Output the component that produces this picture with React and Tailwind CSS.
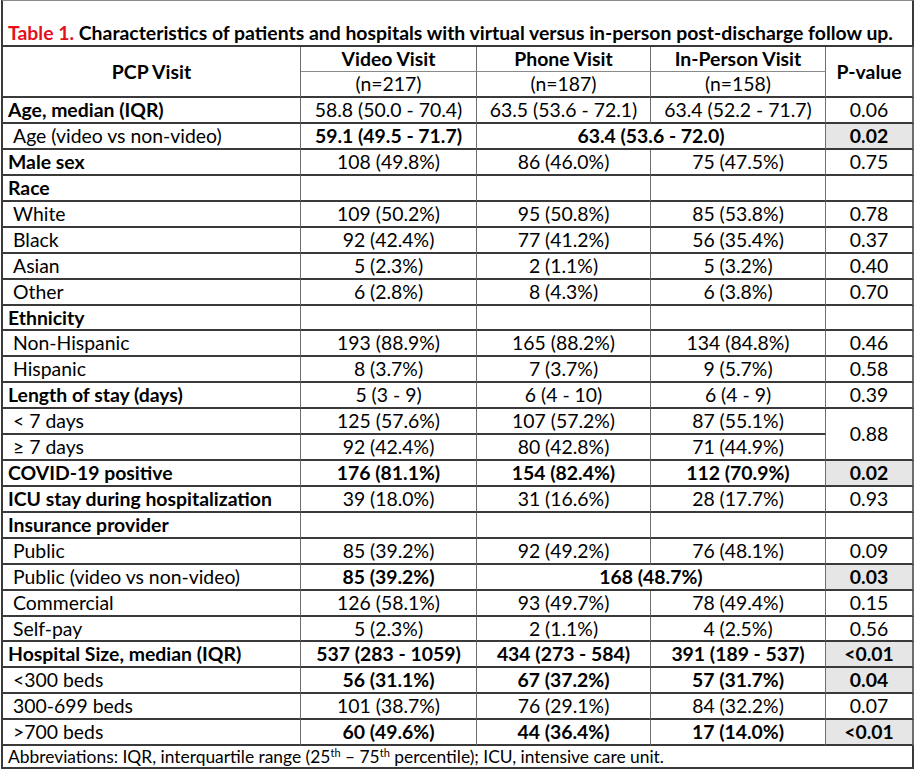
import React from 'react';

// Characteristics table (Word-style export)
const rows = [
  { label: 'Age, median (IQR)', bold: true, cells: ['58.8 (50.0 - 70.4)', '63.5 (53.6 - 72.1)', '63.4 (52.2 - 71.7)'], p: '0.06' },
  { label: 'Age (video vs non-video)', cells: [{ t: '59.1 (49.5 - 71.7)', b: true }, { t: '63.4 (53.6 - 72.0)', b: true, span: 2 }], p: '0.02', sig: true },
  { label: 'Male sex', bold: true, cells: ['108 (49.8%)', '86 (46.0%)', '75 (47.5%)'], p: '0.75' },
  { label: 'Race', bold: true, cells: ['', '', ''], p: '' },
  { label: 'White', cells: ['109 (50.2%)', '95 (50.8%)', '85 (53.8%)'], p: '0.78' },
  { label: 'Black', cells: ['92 (42.4%)', '77 (41.2%)', '56 (35.4%)'], p: '0.37' },
  { label: 'Asian', cells: ['5 (2.3%)', '2 (1.1%)', '5 (3.2%)'], p: '0.40' },
  { label: 'Other', cells: ['6 (2.8%)', '8 (4.3%)', '6 (3.8%)'], p: '0.70' },
  { label: 'Ethnicity', bold: true, cells: ['', '', ''], p: '', h: 'h-[25px]' },
  { label: 'Non-Hispanic', cells: ['193 (88.9%)', '165 (88.2%)', '134 (84.8%)'], p: '0.46' },
  { label: 'Hispanic', cells: ['8 (3.7%)', '7 (3.7%)', '9 (5.7%)'], p: '0.58' },
  { label: 'Length of stay (days)', bold: true, cells: ['5 (3 - 9)', '6 (4 - 10)', '6 (4 - 9)'], p: '0.39' },
  { label: '< 7 days', cells: ['125 (57.6%)', '107 (57.2%)', '87 (55.1%)'], p: '0.88', pSpan: 2 },
  { label: '≥ 7 days', cells: ['92 (42.4%)', '80 (42.8%)', '71 (44.9%)'], p: null },
  { label: 'COVID-19 positive', bold: true, cells: [{ t: '176 (81.1%)', b: true }, { t: '154 (82.4%)', b: true }, { t: '112 (70.9%)', b: true }], p: '0.02', sig: true },
  { label: 'ICU stay during hospitalization', bold: true, cells: ['39 (18.0%)', '31 (16.6%)', '28 (17.7%)'], p: '0.93' },
  { label: 'Insurance provider', bold: true, cells: ['', '', ''], p: '' },
  { label: 'Public', cells: ['85 (39.2%)', '92 (49.2%)', '76 (48.1%)'], p: '0.09' },
  { label: 'Public (video vs non-video)', cells: [{ t: '85 (39.2%)', b: true }, { t: '168 (48.7%)', b: true, span: 2 }], p: '0.03', sig: true },
  { label: 'Commercial', cells: ['126 (58.1%)', '93 (49.7%)', '78 (49.4%)'], p: '0.15' },
  { label: 'Self-pay', cells: ['5 (2.3%)', '2 (1.1%)', '4 (2.5%)'], p: '0.56', h: 'h-[25px]' },
  { label: 'Hospital Size, median (IQR)', bold: true, cells: [{ t: '537 (283 - 1059)', b: true }, { t: '434 (273 - 584)', b: true }, { t: '391 (189 - 537)', b: true }], p: '<0.01', sig: true },
  { label: '<300 beds', cells: [{ t: '56 (31.1%)', b: true }, { t: '67 (37.2%)', b: true }, { t: '57 (31.7%)', b: true }], p: '0.04', sig: true },
  { label: '300-699 beds', cells: ['101 (38.7%)', '76 (29.1%)', '84 (32.2%)'], p: '0.07' },
  { label: '>700 beds', cells: [{ t: '60 (49.6%)', b: true }, { t: '44 (36.4%)', b: true }, { t: '17 (14.0%)', b: true }], p: '<0.01', sig: true },
];

const cell = 'p-0 border-r border-b-2 border-r-[#6e6e6e] border-b-[#3a3a3a] align-middle';

export default function App() {
  return (
    <div className="bg-white w-[916px] h-[781px] pt-0 pl-[1px] text-black text-[19.4px] leading-none" style={{ fontFamily: 'Lato, "Open Sans", sans-serif' }}>
      <table className="table-fixed border-separate border-spacing-0 w-[913px]">
        <colgroup>
          <col className="w-[300px]" />
          <col className="w-[176px]" />
          <col className="w-[174px]" />
          <col className="w-[175px]" />
          <col className="w-[88px]" />
        </colgroup>
        <tbody>
          <tr className="h-[47px]">
            <td colSpan={5} className="p-0 pl-[5px] pb-[3px] align-bottom font-bold border-t border-l-2 border-r-2 border-b-2 border-t-[#8a8a8a] border-l-[#3a3a3a] border-r-[#3a3a3a] border-b-[#3a3a3a] whitespace-nowrap">
              <span className="text-[#e3101b]">Table 1.</span> Characteristics of patients and hospitals with virtual versus in-person post-discharge follow up.
            </td>
          </tr>
          <tr className="h-[25px]">
            <td rowSpan={2} className={`${cell} border-l-2 border-l-[#3a3a3a] text-center font-bold`}>PCP Visit</td>
            <td className="p-0 border-r border-b border-r-[#6e6e6e] border-b-[#8a8a8a] text-center font-bold">Video Visit</td>
            <td className="p-0 border-r border-b border-r-[#6e6e6e] border-b-[#8a8a8a] text-center font-bold">Phone Visit</td>
            <td className="p-0 border-r border-b border-r-[#6e6e6e] border-b-[#8a8a8a] text-center font-bold">In-Person Visit</td>
            <td rowSpan={2} className={`${cell} border-r-2 border-r-[#3a3a3a] text-center font-bold`}>P-value</td>
          </tr>
          <tr className="h-[26px]">
            <td className={`${cell} text-center`}>(n=217)</td>
            <td className={`${cell} text-center`}>(n=187)</td>
            <td className={`${cell} text-center`}>(n=158)</td>
          </tr>
          {rows.map((r, i) => (
            <tr key={i} className={r.h || 'h-[26px]'}>
              <td className={`${cell} border-l-2 border-l-[#3a3a3a] whitespace-nowrap ${r.bold ? 'font-bold pl-[5px]' : 'pl-[10px]'}`}>{r.label}</td>
              {r.cells.map((c, j) => {
                const o = typeof c === 'string' ? { t: c } : c;
                return (
                  <td key={j} colSpan={o.span || 1} className={`${cell} text-center whitespace-nowrap ${o.b ? 'font-bold' : ''}`}>{o.t}</td>
                );
              })}
              {r.p !== null && (
                <td rowSpan={r.pSpan || 1} className={`${cell} border-r-2 border-r-[#3a3a3a] text-center ${r.sig ? 'font-bold bg-[#e6e6e6]' : ''}`}>{r.p}</td>
              )}
            </tr>
          ))}
          <tr className="h-[23px]">
            <td colSpan={5} className="p-0 pl-[5px] align-middle text-[17.4px] border-l-2 border-r-2 border-b-2 border-[#3a3a3a] whitespace-nowrap">
              Abbreviations: IQR, interquartile range (25<sup className="text-[11px]">th</sup> – 75<sup className="text-[11px]">th</sup> percentile); ICU, intensive care unit.
            </td>
          </tr>
        </tbody>
      </table>
    </div>
  );
}
